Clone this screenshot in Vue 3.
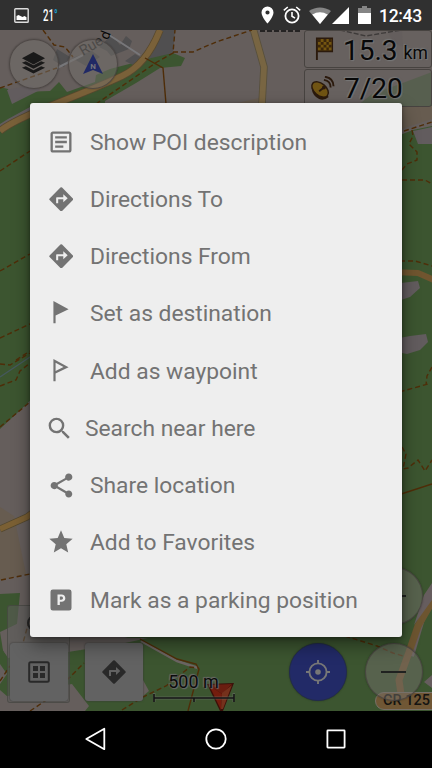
<script setup>
const items = [
  { icon: 'note', label: 'Show POI description' },
  { icon: 'directions', label: 'Directions To' },
  { icon: 'directions', label: 'Directions From' },
  { icon: 'flag', label: 'Set as destination' },
  { icon: 'waypoint', label: 'Add as waypoint' },
  { icon: 'search', label: 'Search near here' },
  { icon: 'share', label: 'Share location' },
  { icon: 'star', label: 'Add to Favorites' },
  { icon: 'parking', label: 'Mark as a parking position' },
]

const icons = {
  note: 'M19 5v14H5V5h14m0-2H5c-1.1 0-2 .9-2 2v14c0 1.1.9 2 2 2h14c1.1 0 2-.9 2-2V5c0-1.1-.9-2-2-2zM14 17H7v-2h7v2zm3-4H7v-2h10v2zm0-4H7V7h10v2z',
  directions: 'M23.4 11.2 12.8.6a1.15 1.15 0 0 0-1.6 0L.6 11.2a1.15 1.15 0 0 0 0 1.6l10.6 10.6a1.15 1.15 0 0 0 1.6 0l10.6-10.6a1.15 1.15 0 0 0 0-1.6zM14 15v-3H9v4H7v-5c0-.6.4-1 1-1h6V7l4.3 4z',
  flag: 'M5 1 19 8.6 7 14.2V21.5H5z',
  waypoint: 'M5 1 19 8.6 7 14.2V21.5H5zM7 4.4v7.500l7.300-3.500z',
  search: 'M15.5 14h-.79l-.28-.27A6.47 6.47 0 0 0 16 9.5 6.5 6.5 0 1 0 9.5 16c1.61 0 3.09-.59 4.23-1.57l.27.28v.79l5 4.99L20.49 19l-4.99-5zm-6 0C7.01 14 5 11.99 5 9.5S7.01 5 9.5 5 14 7.01 14 9.5 11.99 14 9.5 14z',
  share: 'M18 16.08c-.76 0-1.44.3-1.96.77L8.91 12.7c.05-.23.09-.46.09-.7s-.04-.47-.09-.7l7.05-4.11c.54.5 1.25.81 2.04.81 1.66 0 3-1.34 3-3s-1.34-3-3-3-3 1.34-3 3c0 .24.04.47.09.7L8.04 9.81C7.5 9.31 6.79 9 6 9c-1.66 0-3 1.34-3 3s1.34 3 3 3c.79 0 1.5-.31 2.04-.81l7.12 4.16c-.05.21-.08.43-.08.65 0 1.61 1.31 2.92 2.92 2.92s2.92-1.31 2.92-2.92-1.31-2.92-2.92-2.92z',
  star: 'M12 17.27 18.18 21l-1.64-7.03L22 9.24l-7.19-.61L12 2 9.19 8.63 2 9.24l5.46 4.73L5.82 21z',
  parking: 'M5 3h14a2 2 0 0 1 2 2v14a2 2 0 0 1-2 2H5a2 2 0 0 1-2-2V5a2 2 0 0 1 2-2zM9 7.300v9h2v-2.900h1.500c1.900 0 3.200-1.200 3.200-3s-1.300-3.100-3.200-3.100zM11 9h1.300c.9 0 1.400.5 1.400 1.300s-.5 1.400-1.400 1.400H11z',
}
</script>

<template>
  <div class="screen">
    <header class="status">
      <svg class="shot" viewBox="0 0 15 15"><rect x=".8" y=".8" width="13.4" height="13.4" rx=".8" fill="none" stroke="#ddd" stroke-width="1.4" /><path d="M2.5 12V8l2-1 2 1 2 1 2-1 2 1.2V12z" fill="#fff" /></svg>
      <span class="temp">21<i>°</i></span>
      <div class="tray">
        <svg class="pin" viewBox="0 0 13 18"><path fill="#fff" fill-rule="evenodd" d="M6.5.5a6 6 0 0 0-6 6c0 4.5 6 11 6 11s6-6.500 6-11a6 6 0 0 0-6-6zm0 3.900a2.100 2.100 0 1 1 0 4.200 2.100 2.100 0 0 1 0-4.200z" /></svg>
        <svg class="alarm" viewBox="0 0 18 18" fill="none" stroke="#fff"><circle cx="9" cy="10" r="6.600" stroke-width="1.800" /><path d="M9 6v4.300l3 1.800M.8 4.300 4.800 1M17.200 4.300 13.200 1" stroke-width="1.600" /></svg>
        <svg class="wifi" viewBox="0 0 22 17"><path d="M0 4C6.500-.8 15.500-.8 22 4L11 17z" fill="#858585" /><path d="M3.200 7.600C8 4.300 14 4.300 18.800 7.600L11 17z" fill="#fff" /></svg>
        <svg class="cell" viewBox="0 0 17 17"><path d="M17 0v17H0z" fill="#fff" /></svg>
        <svg class="battery" viewBox="0 0 13 18"><path d="M4 0h5v2h4v6H0V2h4z" fill="#858585" /><path d="M0 7h13v11H0z" fill="#fff" /></svg>
        <span class="clock">12:43</span>
      </div>
    </header>

    <main class="map">
      <svg class="canvas" viewBox="0 30 432 680.500">
        <rect y="30" width="432" height="681" fill="#655e5c" />
        <path d="M216 108 259 98 258 110H180zM392 90l40-13v42l-40 13z" fill="#675c50" />
        <g fill="#3c5530">
          <path d="M0 87 8 89 13 103 20 92 50 91 59 82 67 92 95 82 96 75 110 69 133 63 150 55 173 53 185 58 181 66 160 68 136 83 105 101V420L30 401 0 429z" />
          <path d="M392 138 413 130 432 126V711H125L150 630H392z" />
          <path d="M432 72 400 84 372 94 357 106H432z" fill="#455b3c" />
          <path d="M28 648 80 650 89 706 85 711H22L8 697 0 690V655z" />
          <path d="M88 640 125 638 148 630H250V711H72L88 690 68 667z" />
        </g>
        <path d="M7 90 12 104 40 90 30 85zM0 124 8 119 30 107V115L0 132z" fill="#625c5e" />
        <path d="M413 131 432 127V144H418zM392 284 418 281 420 288 410 297 392 303zM394 339 410 336 426 334 428 342 420 350 407 354 392 351z" fill="#625c5e" />
        <path d="M0 430 30 401V637H0z" fill="#655e5c" />
        <path d="M0 507 14 516 26 574 0 580z" fill="#675c50" />
        <path d="M0 594 20 593 17 624 2 632 3 650 8 658H0z" fill="#3c5530" />
        <path d="M0 632 17 624 30 610V637L148 638 125 643 68 652 60 648 8 658 3 650zM0 664 7 674 0 684zM72 684 89 706 85 711H0V698L33 690z" fill="#655e5c" />
        <path d="M143 680 149 691 143 696z" fill="#655e5c" />
        <g fill="#504f50">
          <path d="M162 30H175L173 53 147 59 142 57z" />
          <path d="M57 49 70 57 64 67 53 60zM99 47 112 35 120 45 126 36 132 41 129 49 111 56 107 51zM125 61 135 54 142 58 133 65zM72 58 92 51 100 57 86 66z" />
          <path d="M386 30H402L403 47 394 43z" opacity=".3" />
        </g>
        <path d="M57 68 83 55M106 33 140 55" stroke="#77777a" stroke-width="2" />
        <g fill="none" stroke-linejoin="round">
          <path d="M160 30Q146 65 122 76T55 104 0 131" stroke="#57492f" stroke-width="7.500" />
          <path d="M160 30Q146 65 122 76T55 104 0 131" stroke="#7a6139" stroke-width="6" />
          <path d="M253 28 264 67 262 104" stroke="#58503c" stroke-width="7.500" />
          <path d="M253 28 264 67 262 104" stroke="#786542" stroke-width="5.800" />
          <path d="M0 529 27 517 35 511" stroke="#54482f" stroke-width="7" />
          <path d="M0 529 27 517 35 511" stroke="#7b6034" stroke-width="5.500" />
          <path d="M392 272 418 273 434 280" stroke="#70552f" stroke-width="6" />
          <path d="M438 583 424 612 411 656" stroke="#675c5c" stroke-width="6" />
          <path d="M437 593 418 626 408 655 399 680 401 694" stroke="#6d5530" stroke-width="7" />
        </g>
        <path d="M424 595 432 583V600L414 625M424 682 432 675V688z" fill="#665d5e" />
        <path d="M0 377 30 357" stroke="#45585d" stroke-width="1.300" />
        <path d="M141 641 177 661 198 668" fill="none" stroke="#6b6462" stroke-width="2.500" />
        <g fill="none" stroke="#4f2d08" stroke-width="1.400">
          <path d="M145 58 163 68 166 104M140 639 177 659 196 664 199 669 188 711M392 497 432 484" />
          <path stroke-dasharray="5 3" d="M43 30 54 45 65 47 73 57M0 88 57 68M96 104 157 62 173 53 175 30M173 52H193L216 42 252 30" />
          <path stroke-dasharray="5 3" d="M0 171 30 151M0 271 30 254M0 338 30 324M16 360 30 351M0 364 10 365 30 353M0 386 16 380 20 371 30 363M0 427 30 402M1 580 30 574" />
          <path stroke-dasharray="5 3" d="M404 131 432 122M412 130 413 136 409 144 417 152 417 160 407 164 401 171M402 180H425L432 184M392 261H415L432 266M392 394 428 384M432 367 427 376 426 385M402 447 406 454 403 469 408 468 418 460 425 471 432 460" />
          <path stroke-dasharray="5 3" d="M29 621 23 643M0 681 10 666M30 711 48 699 84 663M122 710 143 697 166 686 190 667 198 668M345 636 377 646 393 653 403 656" />
        </g>
        <path d="M260 31H300M340 30 366 36 401 30" fill="none" stroke="#111" stroke-width="1.400" stroke-dasharray="5 2" />
        <text x="83" y="56" transform="rotate(-31 83 56)" font-size="14.500" fill="#292929">Rue</text>
        <text x="108" y="40.500" transform="rotate(-68 108 40.500)" font-size="14" fill="#080808">d</text>
      </svg>

      <div class="round layers"><svg viewBox="0 0 26 26"><path d="m13 1 12 6.500L13 14 1 7.500z" fill="#191919" /><path d="m1 12.300 4-1.600 8 4.200 8-4.200 4 1.600-12 6.100zm0 5.100 4-1.600 8 4.200 8-4.200 4 1.600-12 6.100z" fill="#191919" /></svg></div>
      <div class="round compass"><svg viewBox="0 0 20 20"><path d="M10 0 20 20 10 16 0 20z" fill="#202965" /><text x="10" y="15" text-anchor="middle" font-size="8" font-weight="700" fill="#74747c">N</text></svg></div>

      <section class="panel distance">
        <svg viewBox="0 0 20 25"><path d="M1 .5h18v15.500H3V24H1z" fill="#2b1a0d" /><rect x="3" y="2" width="14.500" height="12" fill="#745610" /><path d="M3 2h3v3H3zm6 0h3v3H9zm5.500 0h3v3h-3zM6 5h3v3H6zm6 0h2.500v3H12zM3 8h3v3H3zm6 0h3v3H9zm5.500 0h3v3h-3zM6 11h3v3H6zm6 0h2.500v3H12z" fill="#3b260c" /></svg>
        <b>15.3</b><small>km</small>
      </section>
      <section class="panel satellites">
        <svg viewBox="0 0 25 25"><path d="M3 6C-1 12 2 21 9 24q5 2 10-2z" fill="#2b1a0d" /><ellipse cx="10" cy="14" rx="10" ry="6.200" transform="rotate(40 10 14)" fill="#705413" stroke="#2b1a0d" stroke-width="1.500" /><path d="m9 16 5-4M14 4q7 1 7 8M15 .8q9 1.200 9 10" fill="none" stroke="#2b1a0d" stroke-width="2" /><circle cx="14" cy="12" r="2" fill="#2b1a0d" /></svg>
        <b>7/20</b>
      </section>

      <div class="backing"></div>
      <div class="square menu"><svg viewBox="0 0 22 22"><rect x="1.200" y="1.200" width="19.600" height="19.600" rx="1.500" fill="none" stroke="#292929" stroke-width="2" /><path d="M5 5h5v5H5zm7 0h5v5h-5zM5 12h5v5H5zm7 0h5v5h-5z" fill="#292929" /></svg></div>
      <div class="square route"><svg viewBox="0 0 24 24"><path :d="icons.directions" fill="#292929" fill-rule="evenodd" /></svg></div>
      <svg class="marker" viewBox="0 0 28 30"><path d="M1 3 28 2 17 30H14z" fill="#3c1009" /><path d="m3 4 13 9-1 16z" fill="#741d0e" /><path d="M3 4 26 3 16 13z" fill="#6a1e10" /><path d="M16 12 26 4 17 28h-2z" fill="#75311c" /></svg>
      <div class="scale"><span>500 m</span><svg viewBox="0 0 82 10"><path d="M1 0v9M81 0v9M1 5h80M41 5v4" fill="none" stroke="#777" stroke-width="3" opacity=".45" /><path d="M1 1v8M81 1v8M1 5h80M41 5v4" fill="none" stroke="#141414" stroke-width="1.600" /></svg></div>
      <div class="shield">CR 125</div>
      <div class="round plus"><i></i></div>
      <div class="round minus"><i></i></div>
      <div class="round locate"><svg viewBox="0 0 24 24" fill="none" stroke="#777" stroke-width="1.900"><circle cx="12" cy="12" r="8.600" /><path d="M12 0v4M12 20v4M0 12h4M20 12h4" /><circle cx="12" cy="12" r="2.800" fill="#777" stroke="none" /></svg></div>

      <ul class="dialog">
        <li v-for="item in items" :key="item.label" :class="item.icon">
          <div class="glyph"><svg viewBox="0 0 24 24"><path :d="icons[item.icon]" fill-rule="evenodd" /></svg></div>
          <span>{{ item.label }}</span>
        </li>
      </ul>
    </main>

    <nav class="nav">
      <svg viewBox="0 0 24 24"><path d="M20.300 1.800v20.400L2.300 12z" /></svg>
      <svg viewBox="0 0 24 24"><circle cx="12" cy="12" r="9.700" /></svg>
      <svg viewBox="0 0 24 24"><rect x="3.400" y="3.400" width="17.200" height="17.200" rx=".5" /></svg>
    </nav>
  </div>
</template>

<style>
body { background: #000; }
</style>

<style scoped>
.screen { width: 432px; height: 768px; overflow: hidden; display: flex; flex-direction: column; font-family: Roboto, sans-serif; background: #000; }
.screen svg { display: block; flex: none; }
.status { height: 30px; flex: none; background: #303030; display: flex; align-items: center; box-sizing: border-box; padding: 0 10px 0 14px; }
.shot { width: 15px; height: 15px; }
.temp { margin-left: 14px; color: #fff; font-size: 16.5px; font-weight: 500; transform: scaleX(.58); transform-origin: left; }
.temp i { color: #1c9fd0; font-style: normal; }
.tray { margin-left: auto; display: flex; align-items: center; }
.pin { width: 13px; height: 18px; margin-right: 9px; }
.alarm { width: 18px; height: 18px; margin-right: 8px; }
.wifi { width: 22px; height: 17px; margin-right: 1px; }
.cell { width: 17px; height: 17px; margin-right: 9px; }
.battery { width: 13px; height: 18px; margin-right: 8px; }
.clock { width: 43px; white-space: nowrap; color: #fff; font-size: 17.5px; font-weight: 500; line-height: 30px; padding-top: 2px; letter-spacing: -.3px; }
.map { position: relative; height: 680.5px; flex: none; overflow: hidden; }
.canvas { width: 432px; height: 680.5px; }
.round { position: absolute; box-sizing: border-box; display: flex; align-items: center; justify-content: center; border-radius: 50%; background: rgba(117, 113, 108, .48); border: 1px solid rgba(70, 65, 62, .8); box-shadow: 0 0 2px rgba(0, 0, 0, .35); }
.layers, .compass { width: 50px; height: 50px; top: 8.500px; }
.layers { left: 8.500px; }
.compass { left: 67.500px; }
.layers svg { width: 25px; height: 25px; }
.compass svg { width: 20px; height: 20px; }
.panel { position: absolute; left: 304px; width: 128px; height: 38px; box-sizing: border-box; border: 1.5px solid #474340; border-radius: 3px; background: rgba(106, 100, 97, .5); display: flex; align-items: center; color: #080808; text-shadow: 0 0 2px #777, 1px 1px 1px #777, -1px -1px 1px #777; }
.panel b { font-weight: 400; font-size: 28px; line-height: 34px; padding-top: 3px; }
.panel small { font-size: 17.5px; margin-left: 6px; padding-top: 8px; }
.distance { top: 0; padding-left: 10px; }
.distance svg { width: 19px; height: 24px; margin-right: 9px; }
.satellites { top: 38.500px; padding-left: 5px; }
.satellites svg { width: 25px; height: 24px; margin-right: 9px; }
.backing { position: absolute; left: 7px; top: 575px; width: 63px; height: 98px; border-radius: 3px; background: rgba(95, 95, 92, .55); border: 1px solid rgba(60, 60, 55, .5); box-sizing: border-box; }
.backing::after { content: ''; position: absolute; left: 19px; top: 9px; width: 16px; height: 16px; border: 2.5px solid #292929; border-radius: 50%; box-sizing: border-box; }
.square { position: absolute; top: 612.500px; width: 58px; height: 58px; border-radius: 3px; background: #626262; display: flex; align-items: center; justify-content: center; box-shadow: 0 0 2px #333; }
.menu { left: 9.500px; }
.menu svg { width: 22px; height: 22px; }
.route { left: 85px; }
.route svg { width: 24px; height: 24px; }
.plus, .minus { width: 58px; height: 58px; left: 364.500px; }
.plus { top: 537px; }
.minus { top: 613px; }
.plus i, .minus i { width: 25px; height: 2px; background: #202220; }
.locate { left: 289px; top: 613px; width: 58px; height: 58px; background: #222a67; border-color: #222b4d; }
.locate svg { width: 24px; height: 24px; }
.scale { position: absolute; left: 152.500px; top: 640px; width: 82px; color: #0b0b0b; text-align: center; font-size: 18px; line-height: 23px; text-shadow: 0 0 2px #777, 1px 1px 1px #666, -1px -1px 1px #666; }
.scale span { display: block; }
.scale svg { width: 82px; height: 10px; }
.marker { position: absolute; left: 206px; top: 651px; width: 28px; height: 30px; }
.shield { position: absolute; left: 375px; top: 662px; width: 70px; height: 18px; box-sizing: border-box; border: 1.5px solid #777068; border-radius: 9px; background: #705735; padding-left: 7px; font-size: 14.5px; font-weight: 500; line-height: 16px; color: #151411; }
.dialog { position: absolute; left: 30px; top: 73px; width: 372px; height: 534px; box-sizing: border-box; margin: 0; padding: 11px 0 7px 18px; list-style: none; background: #eee; border-radius: 3px; display: grid; grid-template-rows: repeat(9, 57.250px); box-shadow: 0 8px 18px rgba(0, 0, 0, .4), 0 1px 5px rgba(0, 0, 0, .4); }
.dialog li { display: flex; align-items: center; color: #737373; }
.glyph { width: 26px; height: 26px; margin-right: 16px; display: flex; align-items: center; justify-content: center; padding-bottom: 2px; }
.glyph svg { width: 28px; height: 28px; fill: #737373; }
.directions .glyph svg { width: 24.500px; height: 24.500px; }
.flag .glyph svg, .waypoint .glyph svg { width: 26px; height: 26px; }
.search .glyph { width: 23px; margin-right: 14px; padding-bottom: 1px; }
.search .glyph svg { width: 29px; height: 29px; }
.share .glyph svg { width: 29px; height: 29px; }
.dialog span { font-size: 22.8px; line-height: 28px; white-space: nowrap; }
.nav { height: 57.500px; flex: none; background: #000; display: flex; align-items: center; justify-content: center; gap: 96px; }
.nav svg { width: 24px; height: 24px; fill: none; stroke: #fff; stroke-width: 1.800; stroke-linejoin: round; }
</style>
